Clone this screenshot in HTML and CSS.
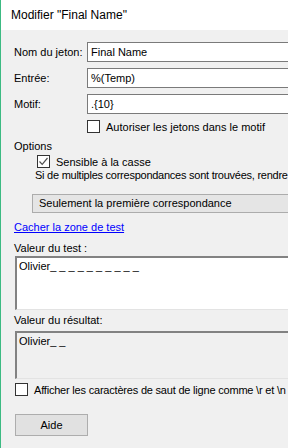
FILE: index.html
```html
<!DOCTYPE html>
<html lang="fr">
<head>
  <meta charset="UTF-8">
  <title>Modifier "Final Name"</title>
  <link rel="stylesheet" href="styles.css">
</head>
<body>
  <div class="dialog">
    <div class="title-bar">Modifier "Final Name"</div>

    <div class="content">
      <div class="field-row">
        <label class="field-label">Nom du jeton:</label>
        <div class="text-input">Final Name</div>
      </div>
      <div class="field-row">
        <label class="field-label">Entrée:</label>
        <div class="text-input">%(Temp)</div>
      </div>
      <div class="field-row">
        <label class="field-label">Motif:</label>
        <div class="text-input">.{10}</div>
      </div>

      <div class="check-row allow-tokens">
        <span class="checkbox"></span>
        <span>Autoriser les jetons dans le motif</span>
      </div>

      <div class="group-title">Options</div>

      <div class="check-row case-sensitive">
        <span class="checkbox checked">
          <svg width="11" height="11" viewBox="0 0 11 11"><path d="M1.5 5.5 L4.2 8.3 L9.5 2" fill="none" stroke="#505050" stroke-width="1.2"/></svg>
        </span>
        <span>Sensible à la casse</span>
      </div>

      <div class="multi-label">Si de multiples correspondances sont trouvées, rendre</div>
      <div class="select-box">Seulement la première correspondance</div>

      <a class="toggle-link" href="#">Cacher la zone de test</a>

      <div class="area-label">Valeur du test :</div>
      <div class="text-area">Olivier_ _ _ _ _ _ _ _ _ _</div>

      <div class="area-label result-label">Valeur du résultat:</div>
      <div class="text-area readonly">Olivier_ _</div>

      <div class="check-row show-newlines">
        <span class="checkbox"></span>
        <span>Afficher les caractères de saut de ligne comme \r et \n</span>
      </div>

      <button class="help-button">Aide</button>
    </div>
  </div>
</body>
</html>
```
FILE: styles.css
```css
html, body {
  margin: 0;
  padding: 0;
  overflow: hidden;
}

body {
  font-family: "Liberation Sans", Arial, sans-serif;
  font-size: 11px;
  color: #000;
  background-color: #f0f0f0;
}

.dialog {
  width: 287px;
  height: 448px;
  border-left: 1px solid #3cba82;
  white-space: nowrap;
  overflow: hidden;
}

.title-bar {
  height: 30px;
  line-height: 30px;
  padding-left: 10px;
  background-color: #fff;
  font-size: 12px;
}

.content {
  display: flex;
  flex-direction: column;
  align-items: flex-start;
  padding: 12px 0 0 13px;
}

.field-row {
  display: flex;
  align-items: center;
  height: 20px;
  margin-bottom: 6px;
}

.field-label {
  width: 73px;
}

.text-input {
  width: 220px;
  height: 18px;
  line-height: 18px;
  padding-left: 3px;
  background-color: #fff;
  border: 1px solid #7a7a7a;
}

.check-row {
  display: flex;
  align-items: center;
  gap: 6px;
  height: 13px;
}

.checkbox {
  display: flex;
  align-items: center;
  justify-content: center;
  width: 11px;
  height: 11px;
  background-color: #fff;
  border: 1px solid #333;
}

.allow-tokens {
  margin: 0 0 0 73px;
}

.group-title {
  margin-top: 7px;
  line-height: 13px;
}

.case-sensitive {
  margin: 2px 0 0 23px;
}

.multi-label {
  margin: 1px 0 0 21px;
  line-height: 13px;
  letter-spacing: -0.25px;
}

.select-box {
  width: 280px;
  height: 17px;
  line-height: 17px;
  margin: 12px 0 0 18px;
  padding-left: 6px;
  background-color: #e5e5e5;
  border: 1px solid #acacac;
}

.toggle-link {
  margin-top: 8px;
  line-height: 13px;
  color: #0000ff;
  text-decoration: underline;
}

.area-label {
  margin-top: 8px;
  line-height: 13px;
}

.text-area {
  width: 280px;
  height: 49px;
  margin: 1px 0 0 1px;
  padding: 2px 0 0 2px;
  background-color: #fff;
  border-top: 2px solid #828282;
  border-left: 2px solid #828282;
  border-bottom: 1px solid #e3e3e3;
  line-height: 13px;
}

.result-label {
  margin-top: 4px;
}

.text-area.readonly {
  height: 43px;
  margin-top: 4px;
  background-color: #f0f0f0;
}

.show-newlines {
  margin: 4px 0 0 1px;
  letter-spacing: -0.2px;
}

.help-button {
  width: 73px;
  height: 22px;
  margin: 18px 0 0 1px;
  font-family: "Liberation Sans", Arial, sans-serif;
  font-size: 11px;
  background-color: #e1e1e1;
  border: 1px solid #adadad;
  padding: 0;
}
```
